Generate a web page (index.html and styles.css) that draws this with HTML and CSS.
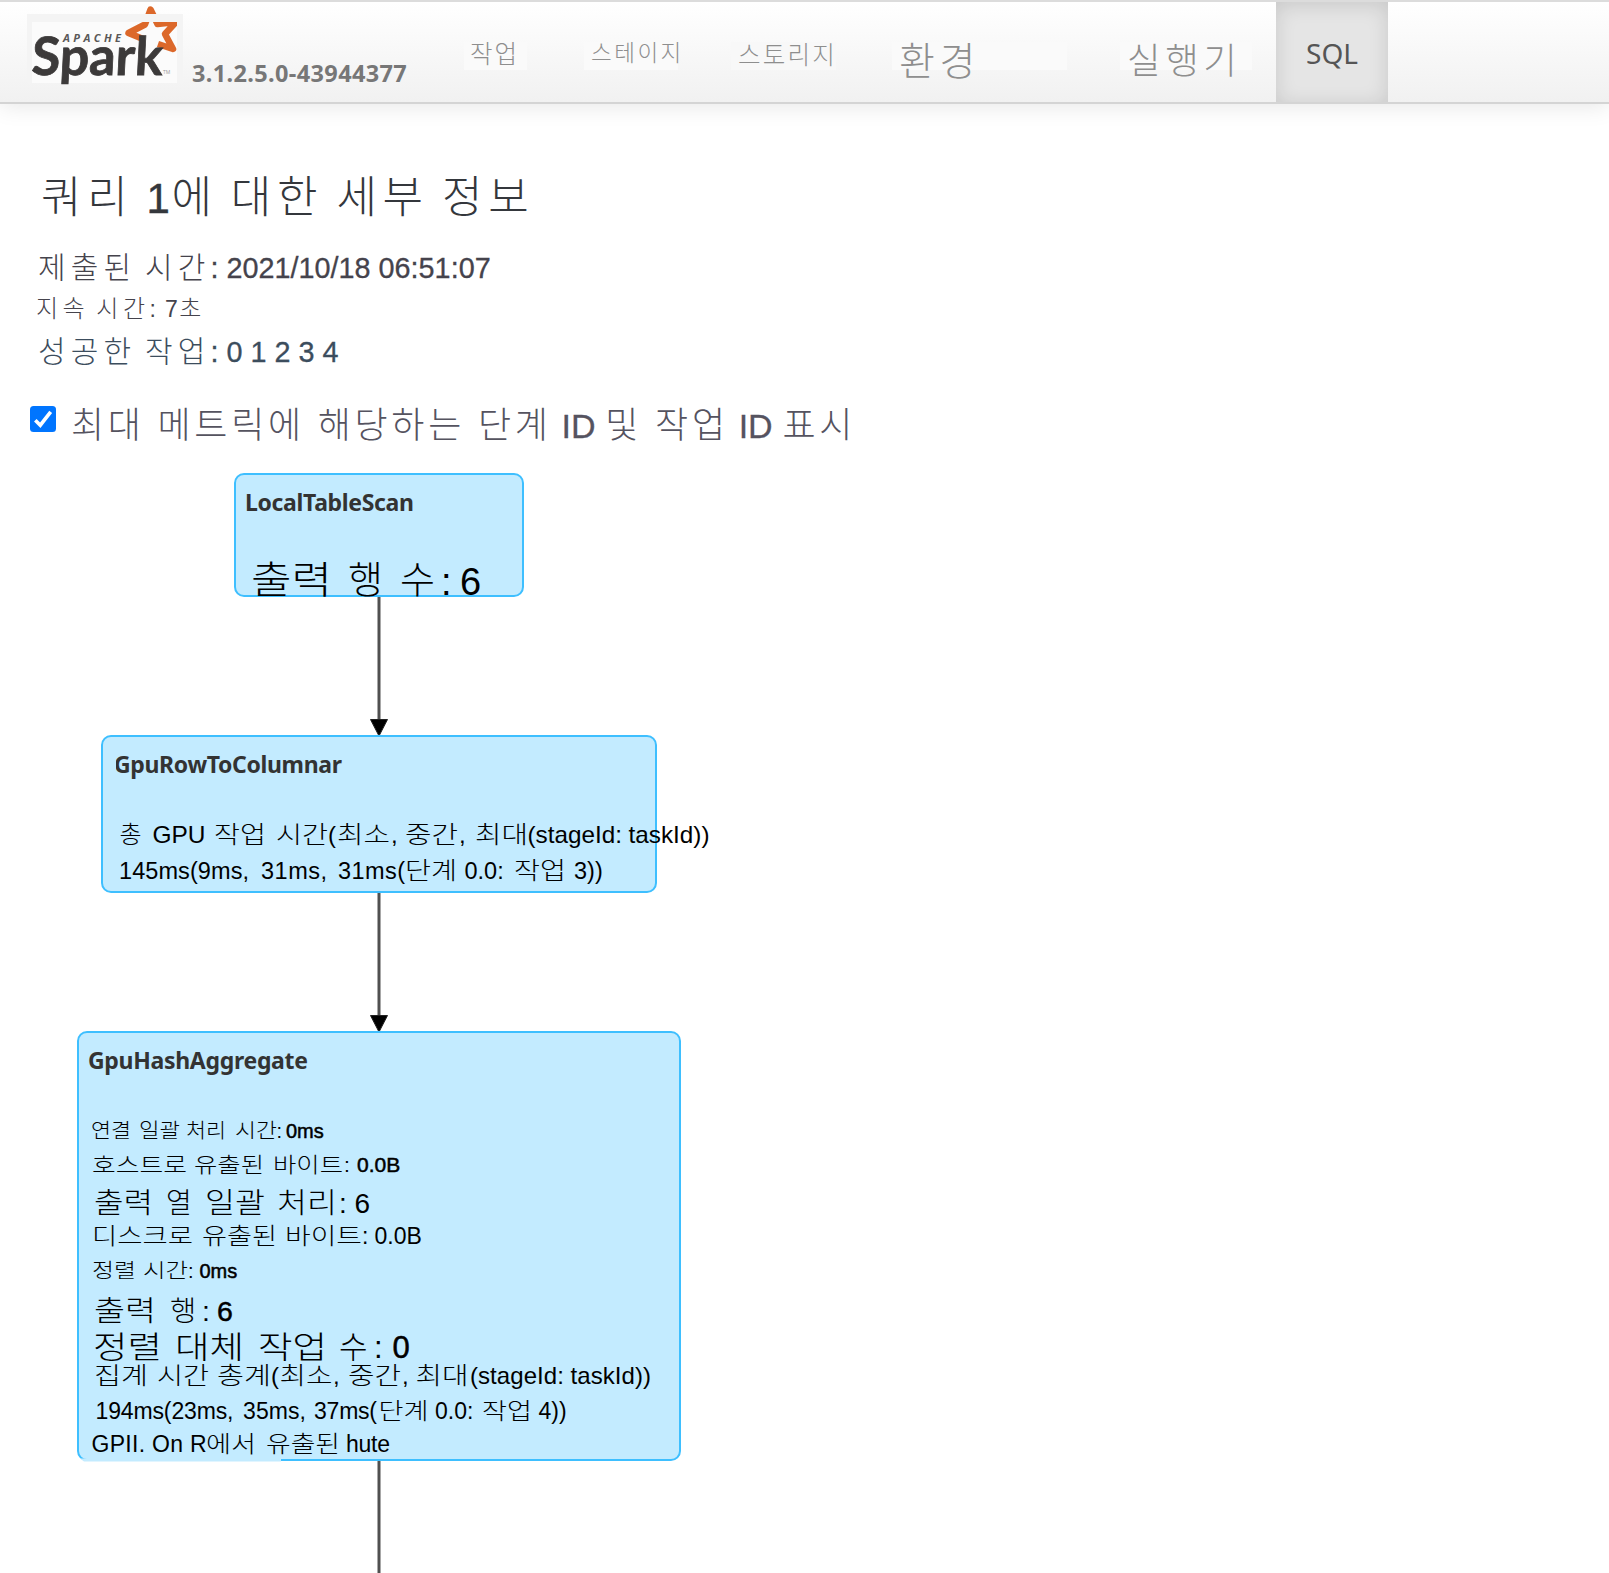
FILE: index.html
```html
<!DOCTYPE html>
<html lang="ko">
<head>
<meta charset="utf-8">
<title>쿼리 1에 대한 세부 정보</title>
<link rel="stylesheet" href="styles.css">
</head>
<body>
<header class="navbar">
  <div class="brand">
    <svg class="logo" width="156" height="84" viewBox="27 2 156 84" aria-label="Apache Spark">
      <rect x="27" y="14" width="156" height="69" fill="#f4f4f4"/>
      <rect x="32" y="22" width="145" height="61" fill="#fbfbfb"/>
      <path d="M143 39 L128.500 33 L145 24.500 L150.500 9.500 L157.500 24 L176 22 L165 34 L173 49 L158 44" fill="none" stroke="#dc682a" stroke-width="6.500" stroke-linejoin="round"/>
      <path d="M27 14H183V83H177V22H27Z" fill="#f4f4f4"/>
      <text class="logo-name" transform="translate(32 75) skewX(-3)" x="-1" y="0" textLength="131" lengthAdjust="spacingAndGlyphs">Spark</text>
      <text class="logo-apache" x="63" y="42" textLength="58">APACHE</text>
      <text class="logo-tm" x="163" y="74">TM</text>
    </svg>
    <span class="version">3.1.2.5.0-43944377</span>
  </div>
  <nav class="nav">
    <a class="item jobs">작업</a>
    <a class="item stages">스테이지</a>
    <a class="item storage">스토리지</a>
    <a class="item env">환경</a>
    <a class="item executors">실행기</a>
    <a class="tab">SQL</a>
  </nav>
</header>
<main>
  <h1 class="title">쿼리 <span class="num">1</span>에 대한 세부 정보</h1>
  <ul class="summary">
    <li class="submitted">제출된 시간<span class="lat">: 2021/10/18 06:51:07</span></li>
    <li class="duration">지속 시간<span class="lat">: 7</span>초</li>
    <li class="succeeded">성공한 작업<span class="lat">: 0 1 2 3 4</span></li>
  </ul>
  <label class="option">
    <svg class="check" width="26" height="26" viewBox="0 0 26 26"><rect width="26" height="26" rx="3.500" fill="#0075ff"/><path d="M5.300 14.200 L10.300 19.200 L20.700 5.800" fill="none" stroke="#fff" stroke-width="3.600"/></svg>
    <span class="option-text">최대 메트릭에 해당하는 단계 <span class="id">ID</span> 및 작업 <span class="id">ID</span> 표시</span>
  </label>
  <svg class="dag" width="1609" height="1113" viewBox="0 460 1609 1113">
    <g class="edge">
      <path d="M379 597V722M379 893V1018M379 1461V1573"/>
      <path class="arrow" d="M370.500 719.500H387.500L379 736ZM370.500 1015.500H387.500L379 1032Z"/>
    </g>
    <g class="node">
      <rect x="235" y="474" width="288" height="122" rx="9"/>
      <rect x="102" y="736" width="554" height="156" rx="9"/>
      <rect x="78" y="1032" width="602" height="428" rx="9"/>
      <path class="mask" d="M80 1458.500H281V1461.500H84Z"/>
    </g>
    <g class="name">
      <text x="245" y="511" textLength="169">LocalTableScan</text>
      <text x="114" y="773" textLength="228">GpuRowToColumnar</text>
      <text x="88" y="1069" textLength="220">GpuHashAggregate</text>
    </g>
    <path class="mask" d="M108 752H116V778H108Z"/>
    <g class="metric">
      <text font-size="38" y="595"><tspan x="251" y="593" textLength="81" lengthAdjust="spacingAndGlyphs">출력</tspan> <tspan x="348">행</tspan> <tspan x="400">수</tspan><tspan x="441" y="595">:</tspan> <tspan x="460">6</tspan></text>
      <text font-size="24" y="843"><tspan x="119.500">총</tspan> <tspan x="152.500" textLength="53" lengthAdjust="spacingAndGlyphs">GPU</tspan> <tspan x="214" textLength="52" lengthAdjust="spacingAndGlyphs">작업</tspan> <tspan x="276" textLength="52" lengthAdjust="spacingAndGlyphs">시간</tspan><tspan x="328">(</tspan><tspan x="337" textLength="53" lengthAdjust="spacingAndGlyphs">최소</tspan><tspan x="391">,</tspan> <tspan x="405" textLength="53" lengthAdjust="spacingAndGlyphs">중간</tspan><tspan x="459">,</tspan> <tspan x="475" textLength="53" lengthAdjust="spacingAndGlyphs">최대</tspan><tspan x="527.500" textLength="182" lengthAdjust="spacingAndGlyphs">(stageId: taskId))</tspan></text>
      <text font-size="23.500" y="879"><tspan x="119" textLength="130">145ms(9ms,</tspan> <tspan x="261" textLength="66">31ms,</tspan> <tspan x="338" textLength="67">31ms(</tspan><tspan x="405" textLength="52" lengthAdjust="spacingAndGlyphs">단계</tspan> <tspan x="464.500">0.0:</tspan> <tspan x="514" textLength="52" lengthAdjust="spacingAndGlyphs">작업</tspan> <tspan x="574">3))</tspan></text>
      <text font-size="20" y="1138"><tspan x="91" textLength="40" lengthAdjust="spacingAndGlyphs">연결</tspan> <tspan x="139" textLength="41" lengthAdjust="spacingAndGlyphs">일괄</tspan> <tspan x="186" textLength="40" lengthAdjust="spacingAndGlyphs">처리</tspan> <tspan x="235" textLength="42" lengthAdjust="spacingAndGlyphs">시간</tspan><tspan x="276.500">:</tspan> <tspan class="strong" x="286">0ms</tspan></text>
      <text font-size="21" y="1172"><tspan x="92" textLength="95" lengthAdjust="spacingAndGlyphs">호스트로</tspan> <tspan x="194" textLength="70" lengthAdjust="spacingAndGlyphs">유출된</tspan> <tspan x="273" textLength="70" lengthAdjust="spacingAndGlyphs">바이트</tspan><tspan x="344">:</tspan> <tspan class="strong" x="357">0.0B</tspan></text>
      <text font-size="28" y="1213"><tspan x="94" textLength="59" lengthAdjust="spacingAndGlyphs">출력</tspan> <tspan x="166">열</tspan> <tspan x="205" textLength="60" lengthAdjust="spacingAndGlyphs">일괄</tspan> <tspan x="277" textLength="60" lengthAdjust="spacingAndGlyphs">처리</tspan><tspan x="339">:</tspan> <tspan x="354.500">6</tspan></text>
      <text font-size="23" y="1243.500"><tspan x="92" textLength="101" lengthAdjust="spacingAndGlyphs">디스크로</tspan> <tspan x="202" textLength="75" lengthAdjust="spacingAndGlyphs">유출된</tspan> <tspan x="285" textLength="77" lengthAdjust="spacingAndGlyphs">바이트</tspan><tspan x="362">:</tspan> <tspan x="374.500">0.0B</tspan></text>
      <text font-size="20" y="1278"><tspan x="92" textLength="44" lengthAdjust="spacingAndGlyphs">정렬</tspan> <tspan x="143" textLength="45" lengthAdjust="spacingAndGlyphs">시간</tspan><tspan x="188">:</tspan> <tspan class="strong" x="199.500">0ms</tspan></text>
      <text font-size="28.500" y="1320.500"><tspan x="94" textLength="62" lengthAdjust="spacingAndGlyphs">출력</tspan> <tspan x="170">행</tspan><tspan x="202">:</tspan> <tspan class="strong" x="217">6</tspan></text>
      <text font-size="31" y="1358"><tspan x="93" textLength="69" lengthAdjust="spacingAndGlyphs">정렬</tspan> <tspan x="175" textLength="69" lengthAdjust="spacingAndGlyphs">대체</tspan> <tspan x="258" textLength="69" lengthAdjust="spacingAndGlyphs">작업</tspan> <tspan x="339">수</tspan><tspan x="374">:</tspan> <tspan class="strong" x="392.500">0</tspan></text>
      <text font-size="24" y="1384"><tspan x="94" textLength="54" lengthAdjust="spacingAndGlyphs">집계</tspan> <tspan x="157" textLength="52" lengthAdjust="spacingAndGlyphs">시간</tspan> <tspan x="217" textLength="54" lengthAdjust="spacingAndGlyphs">총계</tspan><tspan x="271">(</tspan><tspan x="279.500" textLength="53" lengthAdjust="spacingAndGlyphs">최소</tspan><tspan x="333">,</tspan> <tspan x="348" textLength="53" lengthAdjust="spacingAndGlyphs">중간</tspan><tspan x="402">,</tspan> <tspan x="415.500" textLength="53" lengthAdjust="spacingAndGlyphs">최대</tspan><tspan x="470" textLength="181">(stageId: taskId))</tspan></text>
      <text font-size="23" y="1419"><tspan x="95.500" textLength="138">194ms(23ms,</tspan> <tspan x="243" textLength="63">35ms,</tspan> <tspan x="314" textLength="63">37ms(</tspan><tspan x="378.500" textLength="50" lengthAdjust="spacingAndGlyphs">단계</tspan> <tspan x="435">0.0:</tspan> <tspan x="482" textLength="50" lengthAdjust="spacingAndGlyphs">작업</tspan> <tspan x="538.500">4))</tspan></text>
      <text font-size="23" y="1452"><tspan x="91.500" textLength="115">GPII. On R</tspan><tspan x="206" textLength="50" lengthAdjust="spacingAndGlyphs">에서</tspan> <tspan x="266" textLength="74" lengthAdjust="spacingAndGlyphs">유출된</tspan> <tspan x="346" textLength="44">hute</tspan></text>
    </g>
  </svg>
</main>
</body>
</html>
```
FILE: styles.css
```css
* { box-sizing: border-box; }
body {
  margin: 0;
  height: 1573px;
  overflow: hidden;
  background: #fff;
  font-family: "Liberation Sans", "Noto Sans CJK KR", sans-serif;
}
.navbar {
  display: flex;
  height: 104px;
  border-top: 2px solid #dcdcdc;
  border-bottom: 2px solid #d4d4d4;
  background: linear-gradient(#fff, #f1f1f1);
  box-shadow: 0 2px 22px rgba(0, 0, 0, .1);
}
.brand { display: flex; width: 464px; padding-left: 27px; }
.logo { flex: none; }
.logo-name { font: 700 53px Lato, sans-serif; fill: #3c3a3a; stroke: #3c3a3a; stroke-width: .8; }
.logo-apache { font: italic 700 11px "Open Sans", sans-serif; fill: #5a5858; }
.logo-tm { font: 5px "Open Sans", sans-serif; fill: #999; }
.version {
  margin: 55px 0 0 9px;
  font: 700 23.500px/33px "Noto Sans", sans-serif;
  letter-spacing: .36px;
  color: #777;
}
.nav { display: flex; align-items: flex-start; color: #8e8e8e; }
.item {
  margin-top: 40px;
  height: 28px;
  background: #fafafa;
  white-space: nowrap;
  font-family: "Noto Sans CJK KR", sans-serif;
  font-weight: 300;
}
.jobs { width: 63px; padding-left: 6px; font-size: 24.500px; line-height: 22px; letter-spacing: 2px; }
.stages { width: 94px; margin-left: 57px; padding-left: 7px; font-size: 22.500px; line-height: 19px; letter-spacing: 2.500px; }
.storage { width: 105px; margin-left: 53px; padding-left: 7px; font-size: 24.500px; line-height: 24px; letter-spacing: 2.200px; background: #f8f8f8; }
.env { width: 175px; margin-left: 56px; padding-left: 7px; font-size: 39px; line-height: 33px; letter-spacing: 4.500px; }
.executors { width: 132px; margin-left: 53px; padding-left: 7px; font-size: 36.500px; line-height: 34px; letter-spacing: 4.600px; }
.tab {
  width: 112px;
  height: 100px;
  margin-left: 24px;
  background: #e5e5e5;
  box-shadow: inset 0 3px 20px rgba(0, 0, 0, .13);
  font: 28px/103px "Noto Sans", sans-serif;
  text-align: center;
  color: #555;
}
.title {
  height: 57px;
  margin: 65px 0 0 41px;
  font-size: 44px;
  line-height: 57px;
  font-weight: 300;
  letter-spacing: 5.700px;
  word-spacing: -4.700px;
  color: #34373c;
}
.num { font-size: 42px; font-weight: 400; -webkit-text-stroke: .4px; letter-spacing: 1.500px; }
.lat { letter-spacing: 0; word-spacing: 0; font-weight: 400; }
.summary { margin: 20px 0 0; padding: 0 0 0 38px; list-style: none; font-weight: 300; color: #45434c; }
.submitted, .succeeded { height: 44px; font-size: 30px; line-height: 43px; letter-spacing: 5.100px; word-spacing: -4.500px; }
.submitted .lat, .succeeded .lat { font-size: 28.800px; -webkit-text-stroke: .3px; }
.duration { height: 38px; margin-left: -2px; font-size: 24px; line-height: 37px; letter-spacing: 4.500px; word-spacing: -4px; }
.duration .lat { font-size: 23px; letter-spacing: 1.400px; }
.succeeded { height: 48px; line-height: 47px; color: #3c4d5d; }
.option { display: flex; height: 60px; margin-top: 27px; padding-left: 30px; color: #55535f; }
.check { flex: none; margin-top: 3px; }
.option-text {
  margin-left: 15px;
  font-size: 36px;
  line-height: 45px;
  font-weight: 300;
  letter-spacing: 3.700px;
  word-spacing: -.8px;
  white-space: nowrap;
}
.id { margin: 0 -3px; font-size: 34px; font-weight: 400; letter-spacing: 0; -webkit-text-stroke: .3px; }
.dag { display: block; margin-top: -3px; }
.edge { fill: none; stroke: #505050; stroke-width: 3; }
.edge .arrow { fill: #000; stroke: #222; stroke-width: 1; }
.node { fill: #c3ebff; stroke: #3ebfff; stroke-width: 2; }
.mask { fill: #c3ebff; stroke: none; }
.name { font: 700 23px "Noto Sans", sans-serif; fill: #333; }
.metric { font-family: "Liberation Sans", "Noto Sans CJK KR", sans-serif; font-weight: 300; fill: #000; }
.strong { stroke: #000; stroke-width: .5; }
```
